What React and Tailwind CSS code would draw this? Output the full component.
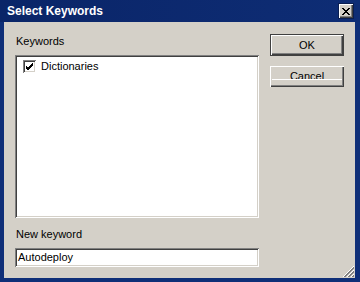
import React from 'react';

const sunken = 'shadow-[inset_1px_1px_0_#808080,inset_-1px_-1px_0_#ffffff,inset_2px_2px_0_#404040,inset_-2px_-2px_0_#d4d0c8]';
const raised = 'shadow-[inset_1px_1px_0_#ffffff,inset_-1px_-1px_0_#404040,inset_-2px_-2px_0_#808080]';

function CheckBox() {
  return (
    <div className={`w-[13px] h-[13px] bg-white ${sunken} flex items-center justify-center`}>
      <svg width="9" height="9" viewBox="0 0 9 9">
        <path d="M1 4 L3 6 L8 1 M1 5 L3 7 L8 2 M1 6 L3 8 L8 3" stroke="#000" strokeWidth="1" fill="none" shapeRendering="crispEdges" />
      </svg>
    </div>
  );
}

function Grip() {
  return (
    <svg width="12" height="12" viewBox="0 0 12 12" className="absolute right-[1px] bottom-[1px]" shapeRendering="crispEdges">
      {[0, 4, 8].map((o) => (
        <g key={o}>
          <line x1={o + 1} y1="12" x2="12" y2={o + 1} stroke="#ffffff" strokeWidth="1" />
          <line x1={o + 2} y1="12" x2="12" y2={o + 2} stroke="#808080" strokeWidth="1" />
          <line x1={o + 3} y1="12" x2="12" y2={o + 3} stroke="#808080" strokeWidth="1" />
        </g>
      ))}
    </svg>
  );
}

export default function App() {
  return (
    <div className="w-[360px] h-[282px] bg-[#0f2f78] flex flex-col pl-[4px] pr-[5px] pb-[4px] font-['Liberation_Sans',Arial,sans-serif] text-[11px] text-black select-none">
      <div className="h-[22px] flex items-center justify-between bg-gradient-to-r from-[#0a2568] to-[#0e2d75] -mx-[4px] -mr-[5px] pl-[7px] pr-[7px]">
        <span className="text-white font-bold text-[12px]">Select Keywords</span>
        <div className={`w-[14px] h-[14px] bg-[#d4d0c8] ${raised} flex items-center justify-center outline outline-1 outline-[#0a1e50]`}>
          <svg width="8" height="7" viewBox="0 0 8 7" shapeRendering="crispEdges">
            <path d="M0 0h2v1h-2z M6 0h2v1h-2z M1 1h2v1h-2z M5 1h2v1h-2z M2 2h4v1h-4z M3 3h2v1h-2z M2 4h4v1h-4z M1 5h2v1h-2z M5 5h2v1h-2z M0 6h2v1h-2z M6 6h2v1h-2z" fill="#000" />
          </svg>
        </div>
      </div>
      <div className="relative flex-1 bg-[#d4d0c8] flex pl-[11px] pt-[12px] gap-[11px]">
        <div className="w-[244px] flex flex-col">
          <div className="h-[14px] leading-[14px] pl-[1px]">Keywords</div>
          <div className={`mt-[7px] h-[163px] bg-white ${sunken} pt-[3px] pl-[8px]`}>
            <div className="flex items-center gap-[5px]">
              <CheckBox />
              <span>Dictionaries</span>
            </div>
          </div>
          <div className="mt-[9px] h-[14px] leading-[14px] pl-[1px]">New keyword</div>
          <div className={`mt-[7px] h-[19px] bg-white ${sunken} pl-[3px] flex items-center`}>Autodeploy</div>
        </div>
        <div className="w-[74px] flex flex-col">
          <div className="h-[22px] bg-[#404040] p-[1px]">
            <div className={`h-full bg-[#d4d0c8] ${raised} flex items-center justify-center`}>OK</div>
          </div>
          <div className={`relative mt-[10px] h-[21px] bg-[#d4d0c8] ${raised} flex items-center justify-center`}>
            Cancel
            <div className="absolute left-[2px] right-[2px] top-[13px] h-[1px] bg-white" />
          </div>
        </div>
        <Grip />
      </div>
    </div>
  );
}
